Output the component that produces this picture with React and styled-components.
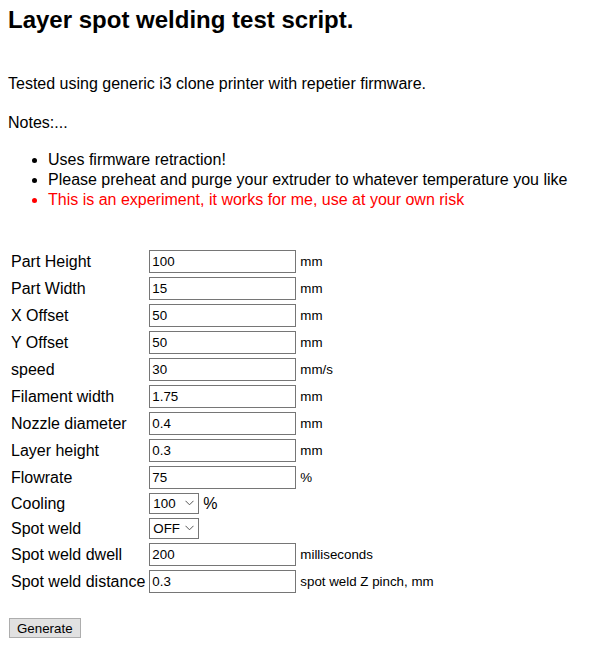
import styled, { createGlobalStyle } from "styled-components";

const Global = createGlobalStyle`
  body {
    margin: 0;
    background: #fff;
    color: #000;
    font-family: "Liberation Sans", Arial, sans-serif;
    font-size: 16px;
  }
`;

const Page = styled.div`
  padding: 6px 8px 16px;
`;

const Title = styled.h2`
  margin: 0;
  font-size: 24px;
  font-weight: bold;
`;

const Para = styled.p`
  margin: ${(p) => p.$top || 16}px 0 16px;
`;

const List = styled.ul`
  margin: 18px 0 0;
  padding-left: 40px;
`;

const Item = styled.li`
  line-height: 20px;
  color: ${(p) => (p.$warn ? "#ff0000" : "#000")};
`;

const Form = styled.table`
  margin-top: 37px;
  border-spacing: 2px;
`;

const Cell = styled.td`
  padding: 1px;
  white-space: nowrap;
`;

const Field = styled.input`
  box-sizing: border-box;
  width: 147px;
  height: 23px;
  padding: 1px 2px;
  border: 1px solid #767676;
  font-family: "Liberation Sans", Arial, sans-serif;
  font-size: 13.33px;
  vertical-align: middle;
`;

const Unit = styled.span`
  margin-left: 4px;
  font-size: ${(p) => (p.$large ? 16 : 13.33)}px;
  vertical-align: middle;
`;

const SelectWrap = styled.span`
  position: relative;
  display: inline-block;
  vertical-align: middle;
`;

const Select = styled.select`
  appearance: none;
  box-sizing: border-box;
  width: ${(p) => p.$w}px;
  height: 21px;
  padding: 0 0 0 3px;
  border: 1px solid #767676;
  border-radius: 0;
  background: #fff;
  font-family: "Liberation Sans", Arial, sans-serif;
  font-size: 13.33px;
  color: #000;
  display: block;
`;

const Chevron = styled.svg`
  position: absolute;
  right: 5px;
  top: 7px;
  pointer-events: none;
`;

const Button = styled.button`
  margin-top: 22px;
  margin-left: 1px;
  height: 20px;
  padding: 1px 7px;
  background: #e1e1e1;
  border: 1px solid #adadad;
  font-family: "Liberation Sans", Arial, sans-serif;
  font-size: 13.33px;
  color: #000;
`;

const rows = [
  ["Part Height", "100", "mm"],
  ["Part Width", "15", "mm"],
  ["X Offset", "50", "mm"],
  ["Y Offset", "50", "mm"],
  ["speed", "30", "mm/s"],
  ["Filament width", "1.75", "mm"],
  ["Nozzle diameter", "0.4", "mm"],
  ["Layer height", "0.3", "mm"],
  ["Flowrate", "75", "%"],
];

function Dropdown({ value, options, width }) {
  return (
    <SelectWrap>
      <Select $w={width} defaultValue={value}>
        {options.map((o) => (
          <option key={o}>{o}</option>
        ))}
      </Select>
      <Chevron width="9" height="6" viewBox="0 0 9 6">
        <path d="M0.5 0.8 L4.5 4.8 L8.5 0.8" fill="none" stroke="#555" strokeWidth="1" />
      </Chevron>
    </SelectWrap>
  );
}

export default function App() {
  return (
    <Page>
      <Global />
      <Title>Layer spot welding test script.</Title>
      <Para $top={41}>Tested using generic i3 clone printer with repetier firmware.</Para>
      <Para $top={21}>Notes:...</Para>
      <List>
        <Item>Uses firmware retraction!</Item>
        <Item>Please preheat and purge your extruder to whatever temperature you like</Item>
        <Item $warn>This is an experiment, it works for me, use at your own risk</Item>
      </List>
      <Form>
        <tbody>
          {rows.map(([label, val, unit]) => (
            <tr key={label}>
              <Cell>{label}</Cell>
              <Cell>
                <Field defaultValue={val} />
                <Unit>{unit}</Unit>
              </Cell>
            </tr>
          ))}
          <tr>
            <Cell>Cooling</Cell>
            <Cell>
              <Dropdown value="100" options={["0", "25", "50", "75", "100"]} width={50} />
              <Unit $large>%</Unit>
            </Cell>
          </tr>
          <tr>
            <Cell>Spot weld</Cell>
            <Cell>
              <Dropdown value="OFF" options={["OFF", "ON"]} width={50} />
            </Cell>
          </tr>
          <tr>
            <Cell>Spot weld dwell</Cell>
            <Cell>
              <Field defaultValue="200" />
              <Unit>milliseconds</Unit>
            </Cell>
          </tr>
          <tr>
            <Cell>Spot weld distance</Cell>
            <Cell>
              <Field defaultValue="0.3" />
              <Unit>spot weld Z pinch, mm</Unit>
            </Cell>
          </tr>
        </tbody>
      </Form>
      <Button>Generate</Button>
    </Page>
  );
}
